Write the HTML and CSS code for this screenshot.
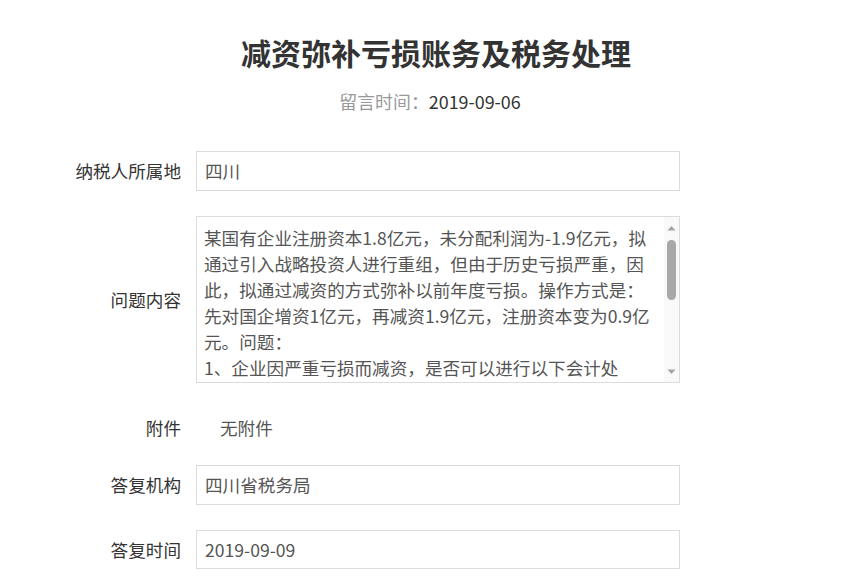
FILE: index.html
```html
<!DOCTYPE html>
<html lang="zh-CN">
<head>
<meta charset="utf-8">
<title>减资弥补亏损账务及税务处理</title>
<link rel="stylesheet" href="styles.css">
</head>
<body>
<div class="page">
  <h1 class="title">减资弥补亏损账务及税务处理</h1>
  <p class="meta"><span class="meta-label">留言时间：</span><span class="meta-value">2019-09-06</span></p>
  <div class="form">
    <div class="row">
      <div class="label">纳税人所属地</div>
      <div class="field">四川</div>
    </div>
    <div class="row">
      <div class="label">问题内容</div>
      <div class="textarea">
        <div class="textarea-content">某国有企业注册资本1.8亿元，未分配利润为-1.9亿元，拟<br>通过引入战略投资人进行重组，但由于历史亏损严重，因<br>此，拟通过减资的方式弥补以前年度亏损。操作方式是：<br>先对国企增资1亿元，再减资1.9亿元，注册资本变为0.9亿<br>元。问题：<br>1、企业因严重亏损而减资，是否可以进行以下会计处</div>
        <div class="scrollbar">
          <svg class="arrow" width="15" height="14" viewBox="0 0 15 14"><path d="M3.5 9.5 L7.5 5 L11.5 9.5 Z" fill="#a3a3a3"/></svg>
          <div class="thumb"></div>
          <div class="track-space"></div>
          <svg class="arrow" width="15" height="14" viewBox="0 0 15 14"><path d="M3.5 4.5 L7.5 9 L11.5 4.5 Z" fill="#a3a3a3"/></svg>
        </div>
      </div>
    </div>
    <div class="row row-plain">
      <div class="label">附件</div>
      <div class="plain">无附件</div>
    </div>
    <div class="row">
      <div class="label">答复机构</div>
      <div class="field">四川省税务局</div>
    </div>
    <div class="row">
      <div class="label">答复时间</div>
      <div class="field field-short">2019-09-09</div>
    </div>
  </div>
</div>
</body>
</html>
```

FILE: styles.css
```css
html, body {
  margin: 0;
  padding: 0;
  background: #ffffff;
}

body {
  font-family: "Noto Sans CJK SC", "Noto Sans", sans-serif;
  color: #333333;
  font-size: 17.6px;
}

.page {
  width: 750px;
  margin-left: 61px;
  padding-top: 31px;
}

.title {
  margin: 0;
  text-align: center;
  font-size: 30px;
  line-height: 42px;
  font-weight: 700;
  color: #333333;
}

.meta {
  margin: 15px 0 0 0;
  text-align: center;
  line-height: 26px;
  padding-right: 12px;
  font-size: 17.9px;
}

.meta-label {
  color: #999999;
}

.meta-value {
  color: #333333;
}

.form {
  margin-top: 37px;
}

.row {
  display: flex;
  align-items: center;
  margin-bottom: 25px;
}

.row-plain {
  height: 40px;
  margin-bottom: 17px;
}

.label {
  width: 120px;
  padding-right: 15px;
  text-align: right;
  color: #333333;
  flex: none;
  line-height: 26px;
}

.field {
  box-sizing: border-box;
  width: 484px;
  height: 40px;
  border: 1px solid #dcdcdc;
  padding: 0 8px;
  line-height: 38px;
  color: #555555;
}

.field-short {
  height: 39px;
  line-height: 37px;
}

.plain {
  padding-left: 24px;
  color: #555555;
  line-height: 26px;
}

.textarea {
  box-sizing: border-box;
  width: 484px;
  height: 167px;
  border: 1px solid #dcdcdc;
  display: flex;
}

.textarea-content {
  flex: 1;
  padding: 8px 0 0 7px;
  line-height: 26px;
  color: #555555;
  white-space: nowrap;
  overflow: hidden;
}

.scrollbar {
  width: 15px;
  flex: none;
  background: #f9f9f9;
  display: flex;
  flex-direction: column;
  align-items: center;
  padding: 4px 0 3px 0;
  box-sizing: border-box;
}

.arrow {
  display: block;
  flex: none;
}

.thumb {
  width: 9px;
  height: 60px;
  margin-top: 5px;
  background: #a8a8a8;
  border-radius: 5px;
  flex: none;
}

.track-space {
  flex: 1;
}
```
